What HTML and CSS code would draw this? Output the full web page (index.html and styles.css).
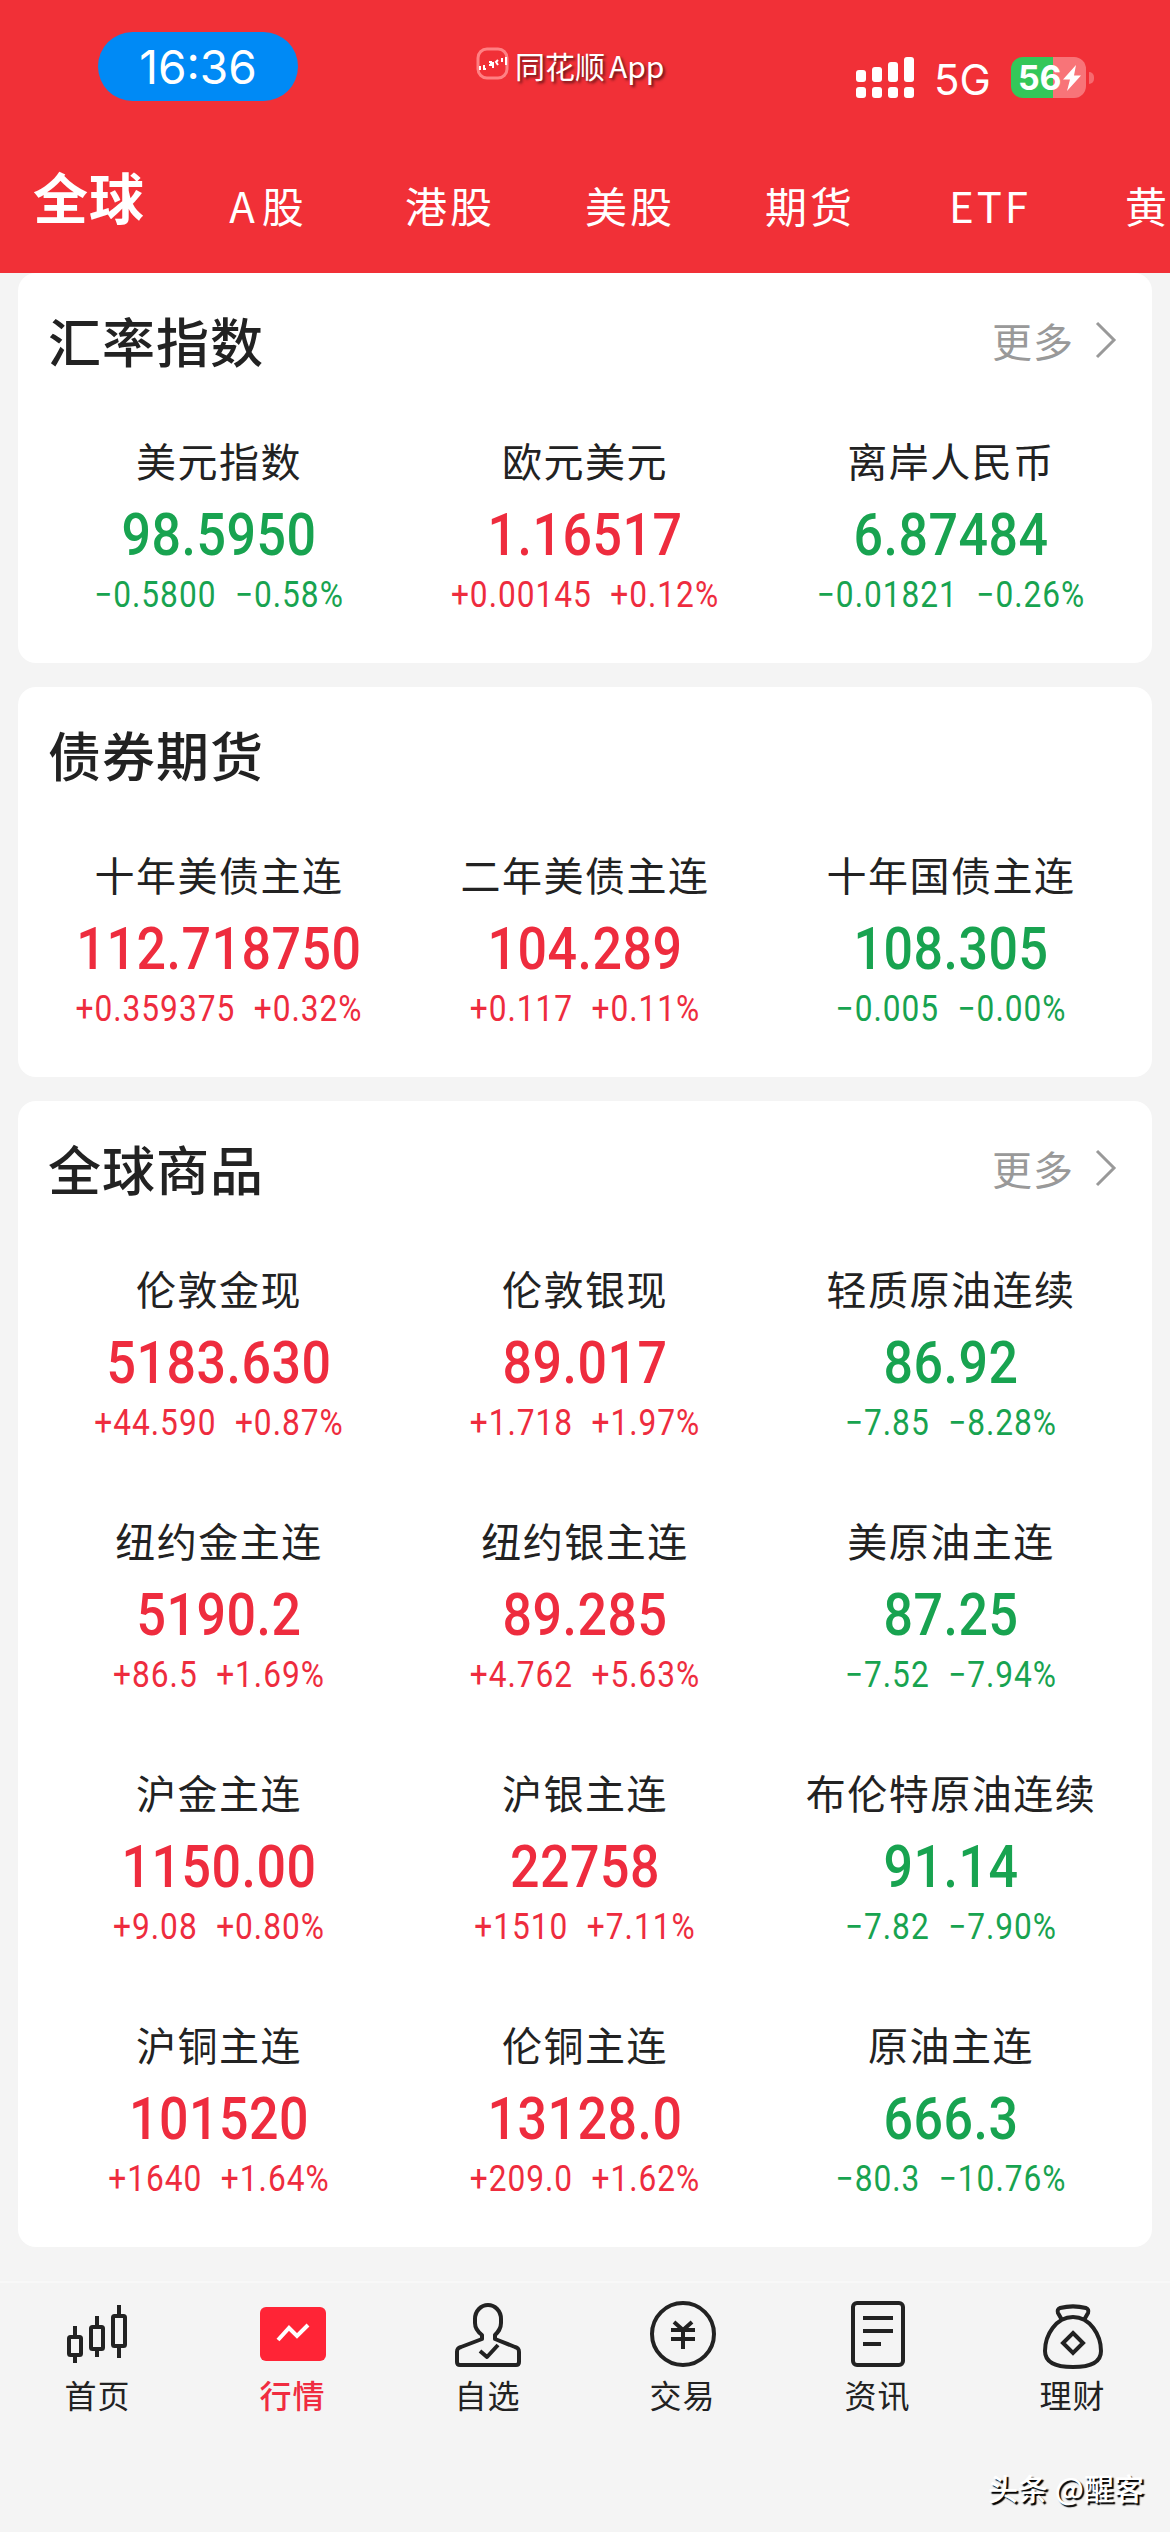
FILE: index.html
```html
<!DOCTYPE html>
<html lang="zh-CN">

<head>
	<meta charset="UTF-8">
	<meta name="viewport" content="width=device-width, initial-scale=1.0">
	<title>行情 - 全球</title>
	<link rel="stylesheet" href="styles.css">
</head>

<body>
	<header class="header">
		<div class="status-bar">
			<span class="clock">16:36</span>
			<div class="app-name">
				<svg class="app-icon" width="34" height="34" viewBox="0 0 34 34" fill="none">
					<rect x="2" y="2" width="29" height="29" rx="9" stroke="#ff8083" stroke-width="3"/>
					<path d="M4 19v4M8 18v4h2M13 15h2v3h-2M17 15v6M22 13l-2 2 2 3M26 11v4M30 10v8" stroke="#fff" stroke-width="2"/>
				</svg>
				<span class="app-text">同花顺<span>App</span></span>
			</div>
			<div class="status-right">
				<svg class="signal" width="60" height="42" viewBox="0 0 60 42" fill="#fff">
					<rect x="0" y="13" width="10" height="12" rx="3"/>
					<rect x="16" y="10" width="10" height="15" rx="3"/>
					<rect x="32" y="5" width="10" height="20" rx="3"/>
					<rect x="48" y="0" width="10" height="25" rx="3"/>
					<rect x="0" y="30" width="10" height="11" rx="3"/>
					<rect x="16" y="30" width="10" height="11" rx="3"/>
					<rect x="32" y="30" width="10" height="11" rx="3"/>
					<rect x="48" y="30" width="10" height="11" rx="3"/>
				</svg>
				<span class="network">5G</span>
				<div class="battery">
					<span>56</span>
					<svg width="18" height="26" viewBox="0 0 18 26" fill="#fff">
						<path d="M13 0L0 14.500h7L4 26 18 10.500h-7z"/>
					</svg>
				</div>
			</div>
		</div>
		<nav class="tabs">
			<a class="tab active">全球</a>
			<a class="tab wide">A股</a>
			<a class="tab">港股</a>
			<a class="tab">美股</a>
			<a class="tab">期货</a>
			<a class="tab">ETF</a>
			<a class="tab last">黄</a>
		</nav>
	</header>

	<main class="content">
		<section class="card">
			<div class="card-head">
				<h2>汇率指数</h2>
				<a class="more">更多
					<svg width="20" height="38" viewBox="0 0 20 38" fill="none" stroke="#999" stroke-width="3">
						<path d="M1 2l17 17L1 36"/>
					</svg>
				</a>
			</div>
			<div class="quotes">
				<div class="quote down">
					<div class="name">美元指数</div>
					<div class="price">98.5950</div>
					<div class="change"><span>−0.5800</span><span>−0.58%</span></div>
				</div>
				<div class="quote up">
					<div class="name">欧元美元</div>
					<div class="price">1.16517</div>
					<div class="change"><span>+0.00145</span><span>+0.12%</span></div>
				</div>
				<div class="quote down">
					<div class="name">离岸人民币</div>
					<div class="price">6.87484</div>
					<div class="change"><span>−0.01821</span><span>−0.26%</span></div>
				</div>
			</div>
		</section>

		<section class="card">
			<div class="card-head">
				<h2>债券期货</h2>
			</div>
			<div class="quotes">
				<div class="quote up">
					<div class="name">十年美债主连</div>
					<div class="price">112.718750</div>
					<div class="change"><span>+0.359375</span><span>+0.32%</span></div>
				</div>
				<div class="quote up">
					<div class="name">二年美债主连</div>
					<div class="price">104.289</div>
					<div class="change"><span>+0.117</span><span>+0.11%</span></div>
				</div>
				<div class="quote down">
					<div class="name">十年国债主连</div>
					<div class="price">108.305</div>
					<div class="change"><span>−0.005</span><span>−0.00%</span></div>
				</div>
			</div>
		</section>

		<section class="card">
			<div class="card-head">
				<h2>全球商品</h2>
				<a class="more">更多
					<svg width="20" height="38" viewBox="0 0 20 38" fill="none" stroke="#999" stroke-width="3">
						<path d="M1 2l17 17L1 36"/>
					</svg>
				</a>
			</div>
			<div class="quotes">
				<div class="quote up">
					<div class="name">伦敦金现</div>
					<div class="price">5183.630</div>
					<div class="change"><span>+44.590</span><span>+0.87%</span></div>
				</div>
				<div class="quote up">
					<div class="name">伦敦银现</div>
					<div class="price">89.017</div>
					<div class="change"><span>+1.718</span><span>+1.97%</span></div>
				</div>
				<div class="quote down">
					<div class="name">轻质原油连续</div>
					<div class="price">86.92</div>
					<div class="change"><span>−7.85</span><span>−8.28%</span></div>
				</div>
				<div class="quote up">
					<div class="name">纽约金主连</div>
					<div class="price">5190.2</div>
					<div class="change"><span>+86.5</span><span>+1.69%</span></div>
				</div>
				<div class="quote up">
					<div class="name">纽约银主连</div>
					<div class="price">89.285</div>
					<div class="change"><span>+4.762</span><span>+5.63%</span></div>
				</div>
				<div class="quote down">
					<div class="name">美原油主连</div>
					<div class="price">87.25</div>
					<div class="change"><span>−7.52</span><span>−7.94%</span></div>
				</div>
				<div class="quote up">
					<div class="name">沪金主连</div>
					<div class="price">1150.00</div>
					<div class="change"><span>+9.08</span><span>+0.80%</span></div>
				</div>
				<div class="quote up">
					<div class="name">沪银主连</div>
					<div class="price">22758</div>
					<div class="change"><span>+1510</span><span>+7.11%</span></div>
				</div>
				<div class="quote down">
					<div class="name">布伦特原油连续</div>
					<div class="price">91.14</div>
					<div class="change"><span>−7.82</span><span>−7.90%</span></div>
				</div>
				<div class="quote up">
					<div class="name">沪铜主连</div>
					<div class="price">101520</div>
					<div class="change"><span>+1640</span><span>+1.64%</span></div>
				</div>
				<div class="quote up">
					<div class="name">伦铜主连</div>
					<div class="price">13128.0</div>
					<div class="change"><span>+209.0</span><span>+1.62%</span></div>
				</div>
				<div class="quote down">
					<div class="name">原油主连</div>
					<div class="price">666.3</div>
					<div class="change"><span>−80.3</span><span>−10.76%</span></div>
				</div>
			</div>
		</section>
	</main>

	<nav class="tabbar">
		<a class="item">
			<svg width="66" height="66" viewBox="0 0 66 66" fill="none" stroke="#222" stroke-width="4">
				<rect x="4" y="36" width="12" height="18" rx="1.500"/>
				<path d="M10 25v11M10 54v8"/>
				<rect x="26" y="26" width="12" height="22" rx="1.500"/>
				<path d="M32 15v11M32 48v8"/>
				<rect x="48" y="15" width="12" height="30" rx="1.500"/>
				<path d="M54 4v11M54 45v12"/>
			</svg>
			<span>首页</span>
		</a>
		<a class="item active">
			<svg width="66" height="66" viewBox="0 0 66 66" fill="none">
				<rect x="0" y="6" width="66" height="54" rx="6" fill="#ff2436"/>
				<path d="M18 39l11-12 8 8 11-11" stroke="#fff" stroke-width="4"/>
			</svg>
			<span>行情</span>
		</a>
		<a class="item">
			<svg width="66" height="66" viewBox="0 0 66 66" fill="none" stroke="#222" stroke-width="4" stroke-linejoin="round">
				<path d="M27 38v-4c-4-3-7-6-7-12v-4c0-8 6-14 13-14s13 6 13 14v4c0 6-3 9-6 12v4l20 8c3 1 4 2 4 5v10c0 2-1 3-3 3H5c-2 0-3-1-3-3V51c0-3 1-4 4-5z"/>
				<path d="M25 50l7 6 11-12"/>
			</svg>
			<span>自选</span>
		</a>
		<a class="item">
			<svg width="66" height="66" viewBox="0 0 66 66" fill="none" stroke="#222" stroke-width="4">
				<circle cx="33" cy="33" r="31"/>
				<path d="M24 21l9 8 9-8M21 29h24M21 38h24M33 29v19"/>
			</svg>
			<span>交易</span>
		</a>
		<a class="item">
			<svg width="66" height="66" viewBox="0 0 66 66" fill="none" stroke="#222" stroke-width="4">
				<rect x="8" y="2" width="50" height="62" rx="4"/>
				<path d="M18 17h30M18 30h30M18 43h18"/>
			</svg>
			<span>资讯</span>
		</a>
		<a class="item">
			<svg width="66" height="66" viewBox="0 0 66 66" fill="none" stroke="#222" stroke-width="4" stroke-linejoin="round">
				<path d="M33 16c17 0 28 18 28 34 0 12-11 16-28 16S5 62 5 50c0-16 11-34 28-34z"/>
				<path d="M22 19l-4-7c-1-3 0-4 2-5 8-2 18-2 26 0 2 1 3 2 2 5l-4 7"/>
				<path d="M33 32l10 10-10 10-10-10z" stroke-linejoin="miter"/>
			</svg>
			<span>理财</span>
		</a>
	</nav>
	<div class="watermark">头条 @醒客</div>
</body>

</html>
```

FILE: styles.css
```css
* {
	box-sizing: border-box;
}

body {
	display: flex;
	flex-direction: column;
	width: 1170px;
	height: 2532px;
	margin: 0;
	overflow: hidden;
	background-color: #f4f4f4;
	color: #222;
	font-family: "Noto Sans CJK SC", sans-serif;
}

svg {
	display: block;
	flex: none;
	overflow: visible;
}

.header {
	height: 273px;
	background-color: #f13037;
	color: #fff;
}

/* status bar */
.status-bar {
	display: flex;
	height: 134px;
	padding-left: 98px;
}

.clock {
	width: 200px;
	height: 69px;
	margin-top: 32px;
	border-radius: 35px;
	background-color: #008af5;
	font-family: Inter, sans-serif;
	font-size: 46px;
	line-height: 70px;
	text-align: center;
}

.app-name {
	display: flex;
	gap: 5px;
	width: 200px;
	margin: 47px 0 0 178px;
	font-size: 30px;
	line-height: 36px;
	text-shadow: 2px 2px 3px rgba(0, 0, 0, 0.6);
}

.app-text span {
	margin-left: 4px;
}

.status-right {
	display: flex;
	margin: 57px 0 0 180px;
}

.network {
	margin: 0 20px 0 18px;
	font-family: Inter, sans-serif;
	font-size: 42px;
	line-height: 46px;
}

.battery {
	position: relative;
	display: flex;
	align-items: center;
	width: 75px;
	height: 41px;
	padding-left: 7px;
	border-radius: 12px;
	background: linear-gradient(to right, #34c759 42px, #f87478 42px);
	font-family: Inter, sans-serif;
	font-size: 34px;
	font-weight: 700;
	gap: 1px;
}

.battery::after {
	content: "";
	position: absolute;
	top: 15px;
	right: -8px;
	width: 5px;
	height: 12px;
	border-radius: 0 5px 5px 0;
	background-color: #f66a6f;
}

/* market tabs */
.tabs {
	display: grid;
	grid-template-columns: 180px repeat(5, 180px) 90px;
	white-space: nowrap;
	font-size: 42px;
	letter-spacing: 3px;
	line-height: 60px;
	text-align: center;
}

.tab {
	padding-top: 41px;
}

.tab.wide {
	letter-spacing: 7px;
}

.tab.last {
	padding-left: 45px;
	letter-spacing: 0;
	text-align: left;
}

.tab.active {
	padding: 31px 0 0 33px;
	font-size: 55px;
	font-weight: 700;
	letter-spacing: 1px;
	text-align: left;
}

/* cards */
.content {
	display: flex;
	flex-direction: column;
	gap: 24px;
	padding: 0 18px;
}

.card {
	padding: 0 18px;
	border-radius: 18px;
	background-color: #fff;
}

.card-head {
	display: flex;
	justify-content: space-between;
	align-items: center;
	height: 138px;
	padding: 0 18px 5px 12px;
}

.card-head h2 {
	margin: 0;
	font-size: 53px;
	font-weight: 500;
	letter-spacing: 1px;
	line-height: 70px;
}

.more {
	display: flex;
	align-items: center;
	gap: 22px;
	color: #999;
	font-size: 40px;
	letter-spacing: 1px;
}

.quotes {
	display: grid;
	grid-template-columns: repeat(3, 1fr);
	grid-auto-rows: 252px;
}

.quote {
	padding-top: 21px;
	text-align: center;
	white-space: nowrap;
}

.name {
	font-size: 40px;
	letter-spacing: 1.5px;
	line-height: 56px;
}

/* Roboto squeezed to a DIN-like width */
.price,
.change {
	font-family: Roboto, sans-serif;
	transform: scaleX(0.88);
}

.price {
	margin-top: 15px;
	font-size: 59px;
	font-weight: 500;
	letter-spacing: 0.6px;
	line-height: 64px;
}

.change {
	display: flex;
	justify-content: center;
	gap: 21px;
	font-size: 36px;
	letter-spacing: 1.1px;
	line-height: 56px;
}

.up .price,
.up .change {
	color: #ee2c3e;
}

.down .price,
.down .change {
	color: #18a350;
}

/* bottom bar */
.tabbar {
	display: grid;
	grid-template-columns: repeat(6, 1fr);
	height: 184px;
	margin-top: 34px;
	padding-top: 18px;
	border-top: 2px solid #f8f8f8;
}

.item {
	display: flex;
	flex-direction: column;
	align-items: center;
	gap: 7px;
	font-size: 32px;
	letter-spacing: 1px;
	line-height: 40px;
}

.item.active {
	color: #f02c40;
	font-weight: 500;
}

.watermark {
	padding-right: 26px;
	font-size: 30px;
	font-weight: 500;
	line-height: 44px;
	text-align: right;
	color: #fff;
	text-shadow: 2px 2px 1px #000;
}
```
